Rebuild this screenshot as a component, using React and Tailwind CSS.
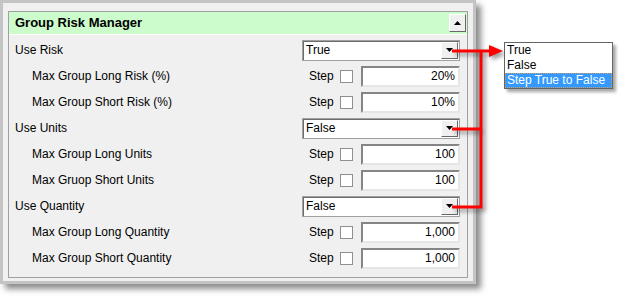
import React from 'react';

const rows = [
  { label: 'Use Risk', type: 'combo', value: 'True' },
  { label: 'Max Group Long Risk (%)', type: 'step', value: '20%' },
  { label: 'Max Group Short Risk (%)', type: 'step', value: '10%' },
  { label: 'Use Units', type: 'combo', value: 'False' },
  { label: 'Max Group Long Units', type: 'step', value: '100' },
  { label: 'Max Gruop Short Units', type: 'step', value: '100' },
  { label: 'Use Quantity', type: 'combo', value: 'False' },
  { label: 'Max Group Long Quantity', type: 'step', value: '1,000' },
  { label: 'Max Group Short Quantity', type: 'step', value: '1,000' },
];

const Combo = ({ value }) => (
  <div className="w-[158px] h-[21px] bg-white border border-[#a0a0a0] shadow-[inset_1px_1px_0_#6d6d6d] flex items-center justify-between">
    <span className="pl-[3px] leading-none">{value}</span>
    <div className="w-[17px] h-[17px] mr-[1px] bg-[#f0f0f0] border border-t-white border-l-white border-r-[#696969] border-b-[#696969] flex items-center justify-center">
      <svg width="7" height="4" viewBox="0 0 7 4">
        <path d="M0 0 L7 0 L3.5 4 Z" fill="#000" />
      </svg>
    </div>
  </div>
);

const StepField = ({ value }) => (
  <div className="w-[158px] flex items-center">
    <span className="pl-[7px] w-[31px]">Step</span>
    <span className="ml-[7px] w-[13px] h-[13px] bg-white border border-[#8f8f8f]" />
    <div className="ml-[8px] w-[99px] h-[21px] bg-white border-2 border-t-[#858585] border-l-[#858585] border-r-[#e6e6e6] border-b-[#e6e6e6] flex items-center justify-end pr-[3px]">
      {value}
    </div>
  </div>
);

export default function App() {
  return (
    <div className="relative w-[622px] h-[296px] bg-white overflow-hidden text-[12px] text-black font-['Liberation_Sans',Arial,sans-serif]">
      <div className="w-[476px] h-[284px] bg-[#f0f0f0] border-[3px] border-[#c4c4c4] px-[5px] pt-[8px] pb-[3px] shadow-[5px_5px_6px_rgba(0,0,0,0.45)]">
        <div className="h-full border border-[#a0a0a0] flex flex-col">
          <div className="h-[22px] shrink-0 bg-[#ccfccc] flex items-center justify-between pl-[6px] pr-[1px]">
            <span className="font-bold text-[13px]">Group Risk Manager</span>
            <div className="w-[17px] h-[18px] bg-[#f0f0f0] border border-t-white border-l-white border-r-[#696969] border-b-[#696969] flex items-center justify-center">
              <svg width="7" height="4" viewBox="0 0 7 4">
                <path d="M0 4 L3.5 0 L7 4 Z" fill="#000" />
              </svg>
            </div>
          </div>
          <div className="h-px bg-white" />
          <div className="pt-[2px] flex flex-col">
            {rows.map((r) => (
              <div key={r.label} className="h-[26px] flex items-center justify-between pr-[7px]">
                <span className={r.type === 'combo' ? 'pl-[6px]' : 'pl-[23px]'}>{r.label}</span>
                {r.type === 'combo' ? <Combo value={r.value} /> : <StepField value={r.value} />}
              </div>
            ))}
          </div>
        </div>
      </div>

      {/* connector arrows */}
      <svg
        className="absolute left-0 top-0 pointer-events-none drop-shadow-[3px_3px_2px_rgba(0,0,0,0.4)]"
        width="622"
        height="296"
        viewBox="0 0 622 296"
      >
        <path d="M452 51 H491 M481 51 V208.5 M452 129 H482.5 M452 207 H482.5" stroke="#ff0000" strokeWidth="3" fill="none" />
        <polygon points="489,45 503,51 489,57" fill="#ff0000" />
      </svg>

      {/* dropdown list */}
      <div className="absolute left-[504px] top-[42px] w-[109px] h-[47px] bg-white border border-[#646464] shadow-[3px_3px_3px_rgba(0,0,0,0.35)] flex flex-col">
        <div className="h-[15px] leading-[15px] pl-[2px]">True</div>
        <div className="h-[15px] leading-[15px] pl-[2px]">False</div>
        <div className="h-[15px] leading-[13px] pl-[1px] bg-[#3399ff] text-white border border-dotted border-[#d8a060]">Step True to False</div>
      </div>
    </div>
  );
}
